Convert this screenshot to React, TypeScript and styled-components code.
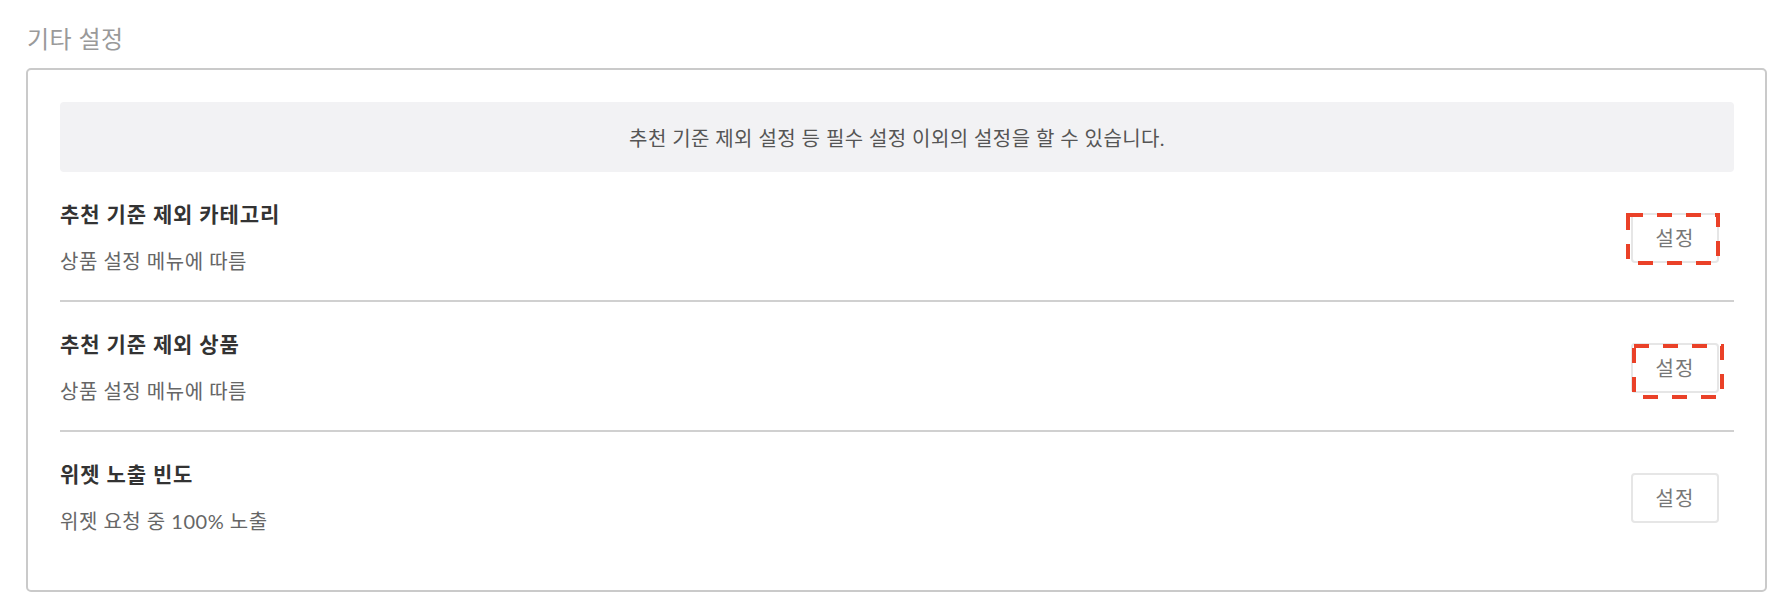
import React from 'react';
import styled, {createGlobalStyle} from 'styled-components';

const GlobalStyle = createGlobalStyle`
  html, body {
    margin: 0;
    padding: 0;
    background: #ffffff;
  }
  body {
    font-family: Lato, "Noto Sans CJK KR", sans-serif;
  }
`;

const redColor = '#ea4128';

const Page = styled.div`
  padding: 24px 15px 16px 26px;
`;

const SectionTitle = styled.h2`
  margin: 0 0 14px 1px;
  font-size: 24px;
  line-height: 30px;
  font-weight: 400;
  letter-spacing: 0.4px;
  color: #9a9a9a;
`;

const Panel = styled.section`
  border: 2px solid #cacaca;
  border-radius: 5px;
  padding: 32px 31px 30px 32px;
`;

const InfoBox = styled.div`
  height: 70px;
  display: flex;
  align-items: center;
  justify-content: center;
  background: #f2f2f4;
  border-radius: 4px;
  font-size: 20px;
  letter-spacing: 0.4px;
  color: #555555;
`;

const Row = styled.div<{$last?: boolean}>`
  display: flex;
  align-items: center;
  justify-content: space-between;
  padding: 30px 15px 27px 0;
  border-bottom: ${({$last}) => ($last ? 'none' : '2px solid #d0d0d0')};
`;

const RowText = styled.div`
  display: flex;
  flex-direction: column;
`;

const RowTitle = styled.div`
  font-size: 21px;
  line-height: 24px;
  font-weight: 700;
  letter-spacing: 0.9px;
  color: #333333;
`;

const RowDesc = styled.div`
  margin-top: 23px;
  font-size: 20px;
  line-height: 24px;
  letter-spacing: 0.5px;
  color: #666666;
`;

const ButtonWrap = styled.span`
  position: relative;
  display: inline-flex;
`;

const SetButton = styled.button`
  width: 88px;
  height: 50px;
  padding: 0;
  border: 2px solid #e6e6e6;
  border-radius: 4px;
  background: #ffffff;
  font-family: Lato, "Noto Sans CJK KR", sans-serif;
  font-size: 20px;
  letter-spacing: 1px;
  color: #777777;
  cursor: pointer;
`;

const Highlight = styled.svg`
  position: absolute;
  pointer-events: none;
  overflow: visible;
`;

type Mark = {x: number; y: number; w: number; h: number};

type Item = {
  title: string;
  desc: string;
  mark?: Mark;
};

const items: Item[] = [
  {title: '추천 기준 제외 카테고리', desc: '상품 설정 메뉴에 따름', mark: {x: -5, y: 0, w: 94, h: 52}},
  {title: '추천 기준 제외 상품', desc: '상품 설정 메뉴에 따름', mark: {x: 1, y: 1, w: 92, h: 55}},
  {title: '위젯 노출 빈도', desc: '위젯 요청 중 100% 노출'},
];

function DashedMark({mark}: {mark: Mark}) {
  return (
    <Highlight
      width={mark.w}
      height={mark.h}
      viewBox={`0 0 ${mark.w} ${mark.h}`}
      style={{left: mark.x, top: mark.y}}
    >
      <rect
        x="2"
        y="2"
        width={mark.w - 4}
        height={mark.h - 4}
        fill="none"
        stroke={redColor}
        strokeWidth="4"
        strokeDasharray="15 14"
      />
    </Highlight>
  );
}

export default function App() {
  return (
    <Page>
      <GlobalStyle />
      <SectionTitle>기타 설정</SectionTitle>
      <Panel>
        <InfoBox>추천 기준 제외 설정 등 필수 설정 이외의 설정을 할 수 있습니다.</InfoBox>
        {items.map((item, i) => (
          <Row key={item.title} $last={i === items.length - 1}>
            <RowText>
              <RowTitle>{item.title}</RowTitle>
              <RowDesc>{item.desc}</RowDesc>
            </RowText>
            <ButtonWrap>
              <SetButton type="button">설정</SetButton>
              {item.mark && <DashedMark mark={item.mark} />}
            </ButtonWrap>
          </Row>
        ))}
      </Panel>
    </Page>
  );
}
